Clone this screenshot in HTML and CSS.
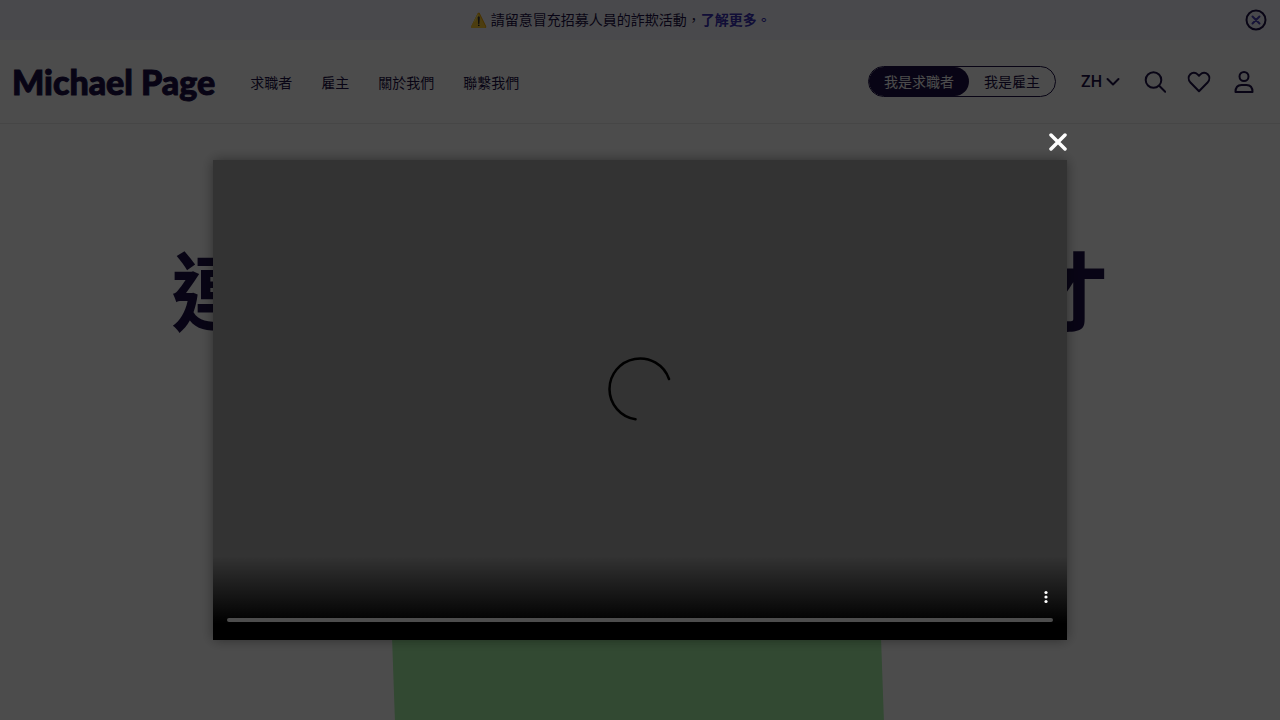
FILE: index.html
```html
<!doctype html>
<html lang="zh-Hant">
<head>
<meta charset="utf-8">
<title>Michael Page</title>
<meta name="viewport" content="width=device-width, initial-scale=1.0">
<link rel="stylesheet" href="styles.css">
</head>
<body>

<aside class="notice">
	<p>⚠️ 請留意冒充招募人員的詐欺活動，<a href="#">了解更多。</a></p>
	<button type="button" aria-label="關閉通知">
		<svg width="22" height="22" viewBox="0 0 22 22">
			<circle cx="11" cy="11" r="9.500" class="ring"/>
			<path d="M7.500 7.500l7 7M14.500 7.500l-7 7" class="cross"/>
		</svg>
	</button>
</aside>

<header class="site-header">
	<a class="logo" href="#">Michael Page</a>
	<nav>
		<a href="#">求職者</a>
		<a href="#">雇主</a>
		<a href="#">關於我們</a>
		<a href="#">聯繫我們</a>
	</nav>
	<div class="tools">
		<div class="switch">
			<button type="button" class="active">我是求職者</button>
			<button type="button">我是雇主</button>
		</div>
		<button type="button" class="lang">ZH
			<svg width="14" height="10" viewBox="0 0 14 10"><path d="M1.500 2L7 7.500 12.500 2"/></svg>
		</button>
		<a href="#" aria-label="搜尋">
			<svg width="22" height="22" viewBox="0 0 22 22"><circle cx="9.500" cy="9" r="7.800"/><path d="M15.200 14.800l6 6"/></svg>
		</a>
		<a href="#" aria-label="收藏">
			<svg width="24" height="24" viewBox="0 0 24 24"><path d="M12 21.200L3.200 12.200C1.200 9.800 1.200 6.300 3.300 4.200 5.500 2.200 8.500 2.400 10.600 4.400L12 5.800l1.400-1.400c2.100-2 5.100-2.200 7.300-.2 2.100 2.100 2.100 5.600.1 8z"/></svg>
		</a>
		<a href="#" aria-label="帳戶">
			<svg width="24" height="24" viewBox="0 0 24 24"><circle cx="12" cy="6.500" r="4.500"/><path d="M3.500 22c0-4.500 2.300-7 6-7h5c3.700 0 6 2.500 6 7z"/></svg>
		</a>
	</div>
</header>

<main class="hero">
	<h1><span>連</span><span>才</span></h1>
	<div class="shape"></div>
</main>

<div class="overlay" role="dialog" aria-modal="true" aria-label="影片">
	<div class="modal">
		<div class="modal-bar">
			<button type="button" aria-label="關閉">
				<svg width="18" height="18" viewBox="0 0 18 18"><path d="M2 2l14 14M16 2L2 16"/></svg>
			</button>
		</div>
		<div class="player">
			<svg class="spinner" width="66" height="66" viewBox="0 0 66 66"><path d="M62 23A30.600 30.600 0 1 0 28.500 63.300"/></svg>
			<div class="controls">
				<button type="button" aria-label="更多選項">
					<svg width="6" height="16" viewBox="0 0 6 16"><circle cx="3" cy="3.500" r="1.600"/><circle cx="3" cy="8" r="1.600"/><circle cx="3" cy="12.500" r="1.600"/></svg>
				</button>
				<input type="range" min="0" max="100" value="0" aria-label="播放進度">
			</div>
		</div>
	</div>
</div>

</body>
</html>
```

FILE: styles.css
```css
* {
	box-sizing: border-box;
}
body {
	margin: 0;
	height: 100vh;
	overflow: hidden;
	display: flex;
	flex-direction: column;
	background: #fff;
	color: #1c1046;
	font: 14px/20px "Noto Sans", "Noto Sans CJK TC", sans-serif;
}
a {
	color: inherit;
	text-decoration: none;
}
button {
	margin: 0;
	padding: 0;
	border: 0;
	background: none;
	color: inherit;
	font: inherit;
	cursor: pointer;
}
svg {
	display: block;
	fill: none;
	stroke: currentColor;
	stroke-width: 2;
	stroke-linecap: round;
	stroke-linejoin: round;
}

/* notice */
.notice {
	display: flex;
	align-items: center;
	height: 40px;
	padding: 0 13px 0 12px;
	background: #f6f6ff;
}
.notice p {
	flex: 1;
	margin: 0;
	padding-right: 16px;
	text-align: center;
}
.notice a {
	color: #3a30b8;
	font-weight: bold;
}
.notice .cross {
	stroke: #4a40b8;
}

/* header */
.site-header {
	display: flex;
	align-items: center;
	height: 84px;
	padding: 0 24px 0 12px;
	border-bottom: 1px solid #ececec;
}
.logo {
	font: 900 34px/40px "Lato Black", Lato, sans-serif;
	-webkit-text-stroke: 1px currentColor;
	white-space: nowrap;
}
.site-header nav {
	display: flex;
	gap: 29px;
	margin-left: 35px;
	padding-top: 2px;
	white-space: nowrap;
}
.tools {
	display: flex;
	align-items: center;
	gap: 21px;
	margin-left: auto;
}
.switch {
	display: flex;
	height: 31px;
	margin-right: 4px;
	border: 1px solid #1c1046;
	border-radius: 16px;
	overflow: hidden;
}
.switch button {
	padding: 0 15px;
	white-space: nowrap;
}
.switch .active {
	border-radius: 16px;
	background: #1c1046;
	color: #fff;
}
.lang {
	display: flex;
	align-items: center;
	gap: 4px;
	margin-right: 3px;
	font: 500 16px/20px Roboto, sans-serif;
}

/* hero */
.hero {
	flex: 1;
	display: flex;
	flex-direction: column;
	align-items: center;
}
.hero h1 {
	display: flex;
	justify-content: space-between;
	width: 73.3%;
	margin: 100px 0 0;
	font: bold 86px/128px "Noto Sans CJK TC", sans-serif;
}
.shape {
	flex: 1;
	width: 38.2%;
	margin: 144px 10px 0 0;
	background: #a8f5a8;
	transform: skewX(2deg);
}

/* video dialog */
.overlay {
	position: fixed;
	top: 0; left: 0;
	right: 0; bottom: 0;
	display: flex;
	align-items: center;
	justify-content: center;
	background: rgba(0, 0, 0, 0.7);
}
.modal {
	width: 66.67%;
}
.modal-bar {
	display: flex;
	align-items: flex-end;
	justify-content: flex-end;
	height: 80px;
	padding-bottom: 9px;
	color: #fff;
}
.modal-bar svg {
	stroke-width: 3.5;
}
.player {
	position: relative;
	display: flex;
	align-items: center;
	justify-content: center;
	aspect-ratio: 16 / 9;
	padding-bottom: 22px;
	background: #333;
	box-shadow: 0 0 12px rgba(0, 0, 0, 0.4);
}
.spinner {
	color: #000;
	stroke-width: 2.5;
}
.controls {
	position: absolute;
	left: 0;
	right: 0;
	bottom: 0;
	display: flex;
	flex-direction: column;
	align-items: flex-end;
	justify-content: flex-end;
	gap: 13px;
	height: 84px;
	padding: 0 14px 18px;
	background: linear-gradient(rgba(0, 0, 0, 0), #000 80%);
}
.controls button {
	margin-right: 4px;
	color: #fff;
}
.controls svg {
	fill: currentColor;
	stroke: none;
}
.controls input {
	-webkit-appearance: none;
	appearance: none;
	width: 100%;
	height: 4px;
	margin: 0;
	border-radius: 2px;
	background: #4d4d4d;
}
.controls input::-webkit-slider-thumb {
	-webkit-appearance: none;
	width: 0;
	height: 0;
}
```
